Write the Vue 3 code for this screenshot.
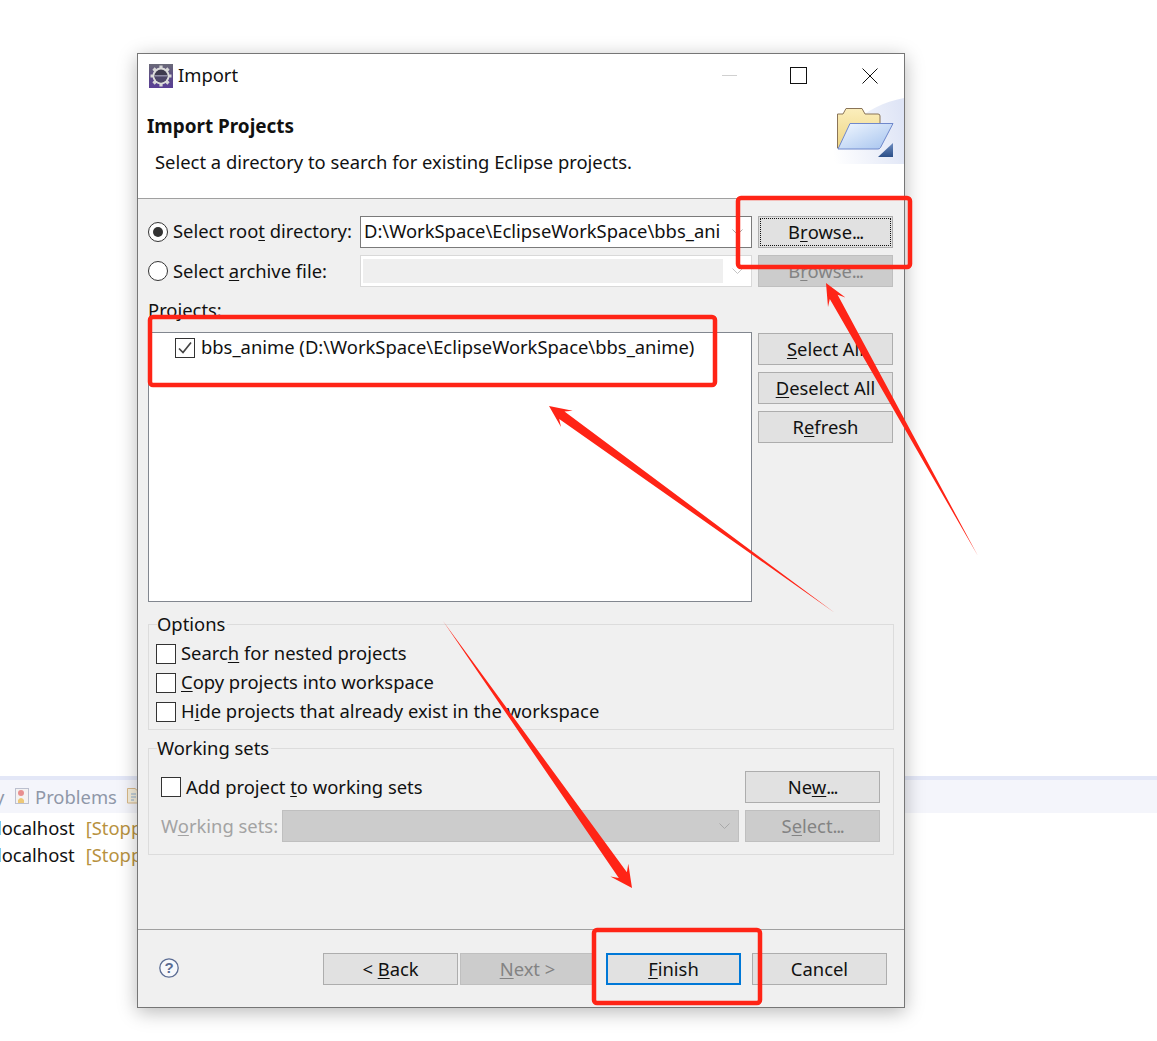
<script setup>
const rects = [
  { x: 738, y: 198, w: 172, h: 69 },
  { x: 150, y: 317, w: 565, h: 68 },
  { x: 594, y: 930, w: 166, h: 73 },
]
function arrow(tx, ty, px, py, len, barb, neck) {
  const l = Math.hypot(px - tx, py - ty)
  const dx = (px - tx) / l
  const dy = (py - ty) / l
  const nx = -dy
  const ny = dx
  const at = (back, off) => `${(px - dx * back + nx * off).toFixed(1)},${(py - dy * back + ny * off).toFixed(1)}`
  return [
    at(0, 0), at(len, barb), at(len * 0.72, neck),
    `${tx},${ty}`,
    at(len * 0.72, -neck), at(len, -barb),
  ].join(' ')
}
const arrows = [
  arrow(978, 556, 826, 283, 22, 10, 4.5),
  arrow(835, 613, 549, 406, 22, 10, 4.5),
  arrow(443, 621, 632, 888, 22, 11, 5),
]
</script>

<template>
  <div class="desktop">
    <div class="backdrop">
      <div class="tabs">
        <span class="clip">y</span>
        <svg class="tab-icon" width="15" height="17" viewBox="0 0 15 17">
          <rect x="0.5" y="0.5" width="13" height="15" fill="#f4f2f2" stroke="#bcc0cf" />
          <circle cx="6" cy="5" r="3" fill="#e88f8f" />
          <path d="M3 15 L3 12 Q6 8 9 12 L9 15 Z" fill="#edc878" />
        </svg>
        <span class="tab-label">Problems</span>
        <svg class="tab-icon second" width="13" height="17" viewBox="0 0 13 17">
          <path d="M0.5 0.500H8L12 4V15H0.5Z" fill="#f6efdc" stroke="#d8b888" />
          <path d="M4 6h5M4 9h5M4 12h3" stroke="#8fb0d0" />
        </svg>
      </div>
      <div class="server">localhost<span class="stopped">[Stopped]</span></div>
      <div class="server">localhost<span class="stopped">[Stopped]</span></div>
    </div>

    <section class="dialog">
      <header class="header">
        <div class="titlebar">
          <svg width="24" height="24" viewBox="0 0 24 24">
            <defs>
              <linearGradient id="logo" x1="0" y1="0" x2="0" y2="1">
                <stop offset="0" stop-color="#6a6a78" />
                <stop offset="0.55" stop-color="#5b4a86" />
                <stop offset="1" stop-color="#5a3f96" />
              </linearGradient>
            </defs>
            <rect width="24" height="24" fill="url(#logo)" />
            <g stroke="#d6d6d6" stroke-width="3.2">
              <path d="M12 1.500v21M1.500 12h21M4.500 4.500l15 15M19.500 4.500l-15 15" />
            </g>
            <circle cx="12" cy="12" r="8.500" fill="#dcdcdc" />
            <circle cx="12" cy="12" r="6.500" fill="#3e3a4e" />
            <path d="M5.500 12a6.500 6.500 0 0 0 13 0z" fill="#4d4668" />
            <rect x="6" y="11" width="12" height="1.500" fill="#8f8ba6" />
          </svg>
          <span class="title">Import</span>
          <div class="window-controls">
            <span class="win-btn"><i class="min"></i></span>
            <span class="win-btn"><i class="max"></i></span>
            <span class="win-btn">
              <svg width="16" height="16" viewBox="0 0 16 16"><path d="M0.5 0.500l15 15M15.500 0.500l-15 15" stroke="#111" fill="none" /></svg>
            </span>
          </div>
        </div>
        <div class="banner-row">
          <div class="banner-text">
            <h1>Import Projects</h1>
            <p>Select a directory to search for existing Eclipse projects.</p>
          </div>
          <svg class="banner" width="75" height="66" viewBox="0 0 75 66">
            <defs>
              <linearGradient id="wash" x1="0" y1="0.6" x2="1" y2="0.4">
                <stop offset="0" stop-color="#ffffff" />
                <stop offset="1" stop-color="#dfe5f6" />
              </linearGradient>
              <linearGradient id="front" x1="0" y1="0" x2="1" y2="1">
                <stop offset="0" stop-color="#f2f8ff" />
                <stop offset="1" stop-color="#a4c2ee" />
              </linearGradient>
              <linearGradient id="back" x1="0" y1="0" x2="0" y2="1">
                <stop offset="0" stop-color="#fbeebc" />
                <stop offset="1" stop-color="#eed584" />
              </linearGradient>
              <linearGradient id="grip" x1="0" y1="0" x2="0" y2="1">
                <stop offset="0" stop-color="#6d8cc0" />
                <stop offset="1" stop-color="#2b4f88" />
              </linearGradient>
            </defs>
            <path d="M0 66 C8 34 34 8 75 0 V66 Z" fill="url(#wash)" />
            <path d="M8.500 16 H14 L17 10.500 H33 L36 16 H49 Q51 16 51 18 V50 H8.500 Z" fill="url(#back)" stroke="#8a7458" />
            <path d="M21 25.500 H64 L51.500 49.500 Q50.500 51 49 51 H9 Z" fill="url(#front)" stroke="#6f88cc" />
            <path d="M64 45 V59 H49 Z" fill="url(#grip)" />
          </svg>
        </div>
      </header>

      <main class="body">
        <div class="source-grid">
          <label class="radio-label"><span class="radio on"></span><span class="lift-high">Select roo<u>t</u> directory:</span></label>
          <div class="combo active">
            <span class="combo-text lift-high">D:\WorkSpace\EclipseWorkSpace\bbs_ani</span>
            <svg class="chevron" width="11" height="6" viewBox="0 0 11 6"><path d="M0.5 0.500l5 5 5-5" fill="none" stroke="#a8a8a8" /></svg>
          </div>
          <button class="btn focused"><span>B<u>r</u>owse<i class="dots">...</i></span></button>

          <label class="radio-label"><span class="radio"></span><span class="lift">Select <u>a</u>rchive file:</span></label>
          <div class="combo off">
            <span class="combo-fill"></span>
            <svg class="chevron" width="11" height="6" viewBox="0 0 11 6"><path d="M0.5 0.500l5 5 5-5" fill="none" stroke="#c4c4c4" /></svg>
          </div>
          <button class="btn disabled">B<u>r</u>owse<i class="dots">...</i></button>
        </div>

        <div class="projects-label">Projects:</div>
        <div class="projects">
          <div class="list">
            <div class="list-row">
              <span class="check small">
                <svg width="16" height="14" viewBox="0 0 16 14"><path d="M2 7.500l4 4 8-10" fill="none" stroke="#444" stroke-width="1.700" /></svg>
              </span>
              <span class="lift3">bbs_anime (D:\WorkSpace\EclipseWorkSpace\bbs_anime)</span>
            </div>
          </div>
          <div class="side">
            <button class="btn"><u>S</u>elect All</button>
            <button class="btn"><u>D</u>eselect All</button>
            <button class="btn">R<u>e</u>fresh</button>
          </div>
        </div>

        <div class="group options">
          <div class="legend">Options</div>
          <label class="opt"><span class="check"></span><span class="lift">Searc<u>h</u> for nested projects</span></label>
          <label class="opt"><span class="check"></span><span class="lift"><u>C</u>opy projects into workspace</span></label>
          <label class="opt"><span class="check"></span><span class="lift">H<u>i</u>de projects that already exist in the workspace</span></label>
        </div>

        <div class="group sets">
          <div class="legend">Working sets</div>
          <div class="sets-row first">
            <label class="add"><span class="check"></span><span class="lift">Add project <u>t</u>o working sets</span></label>
            <button class="btn">Ne<u>w</u><i class="dots">...</i></button>
          </div>
          <div class="sets-row">
            <span class="sets-label lift">W<u>o</u>rking sets:</span>
            <div class="combo gray">
              <svg class="chevron" width="11" height="6" viewBox="0 0 11 6"><path d="M0.5 0.500l5 5 5-5" fill="none" stroke="#a8a8a8" /></svg>
            </div>
            <button class="btn disabled">S<u>e</u>lect<i class="dots">...</i></button>
          </div>
        </div>
      </main>

      <footer class="footer">
        <svg class="help" width="20" height="20" viewBox="0 0 20 20">
          <circle cx="10" cy="10" r="9.200" fill="#f7f8fb" stroke="#5b6c93" stroke-width="1.300" />
          <text x="10" y="15" text-anchor="middle" class="help-q">?</text>
        </svg>
        <div class="nav">
          <button class="btn">&lt; <u>B</u>ack</button>
          <button class="btn disabled next"><u>N</u>ext &gt;</button>
          <button class="btn primary"><u>F</u>inish</button>
          <button class="btn">Cancel</button>
        </div>
      </footer>
    </section>

    <svg class="marks" width="1157" height="1041" viewBox="0 0 1157 1041">
      <rect v-for="(r, i) in rects" :key="i" :x="r.x" :y="r.y" :width="r.w" :height="r.h" rx="3" fill="none" stroke="#ff2416" stroke-width="4.500" />
      <polygon v-for="(p, i) in arrows" :key="'a' + i" :points="p" fill="#ff2416" />
    </svg>
  </div>
</template>

<style scoped>
.desktop {
  position: relative;
  width: 1157px;
  height: 1041px;
  overflow: hidden;
  background: #fff;
  font-family: "Noto Sans", "Open Sans", sans-serif;
  font-size: 18.4px;
  color: #111;
}
u { text-underline-offset: 2px; text-decoration-thickness: 1px; }
.dots { font-style: normal; letter-spacing: -1.3px; }
.lift { padding-bottom: 2px; }
.lift-high { padding-bottom: 4px; }
.lift3 { padding-bottom: 4px; }

.backdrop { padding-top: 776px; }
.tabs {
  height: 37px;
  box-sizing: border-box;
  border-top: 4px solid #e3e7f7;
  background: #f4f5fb;
  display: flex;
  align-items: center;
  color: #8f97a8;
}
.clip { margin-left: -5px; width: 12px; }
.tab-icon { margin-left: 8px; }
.tab-icon.second { margin-left: 10px; }
.tab-label { margin-left: 5px; }
.server { height: 27px; line-height: 27px; margin-left: -3px; white-space: nowrap; position: relative; top: 1px; }
.stopped { margin-left: 11px; color: #b8923f; }

.dialog {
  position: absolute;
  left: 137px;
  top: 53px;
  width: 768px;
  height: 955px;
  box-sizing: border-box;
  border: 1px solid #767676;
  background: #f0f0f0;
  box-shadow: 0 4px 18px rgba(0, 0, 0, 0.28);
  display: flex;
  flex-direction: column;
}

.header { background: #fff; height: 145px; box-sizing: border-box; border-bottom: 1px solid #a0a0a0; flex: none; }
.titlebar { height: 44px; display: flex; align-items: center; padding-left: 11px; }
.title { margin-left: 5px; padding-bottom: 4px; }
.window-controls { margin-left: auto; display: flex; margin-right: -1px; }
.win-btn { width: 71px; height: 44px; display: flex; align-items: center; justify-content: center; padding-bottom: 1px; box-sizing: border-box; }
.min { display: block; width: 15px; height: 1px; background: #d0d0d0; margin-left: 4px; }
.max { display: block; width: 15px; height: 15px; border: 1px solid #111; }
.banner-row { display: flex; justify-content: space-between; }
.banner-text { padding: 14px 0 0 9px; }
h1 { margin: 0; font-size: 18.9px; font-weight: 700; line-height: 28px; }
p { margin: 8px 0 0 8px; line-height: 28px; }

.body { flex: 1; padding: 0 11px 0 10px; min-height: 0; }
.source-grid {
  display: grid;
  grid-template-columns: 212px 392px 141px;
  grid-auto-rows: 32px;
  column-gap: 0;
  row-gap: 7px;
  padding-top: 17px;
  align-items: center;
}
.source-grid .btn { margin-left: 6px; }
.radio-label { display: flex; align-items: center; gap: 5px; white-space: nowrap; }
.radio {
  width: 20px; height: 20px; box-sizing: border-box; flex: none;
  border: 1px solid #333; border-radius: 50%; background: #fff;
  display: flex; align-items: center; justify-content: center;
}
.radio.on::after { content: ""; width: 10px; height: 10px; border-radius: 50%; background: #333; }

.combo {
  height: 32px; box-sizing: border-box; position: relative;
  display: flex; align-items: center;
  border: 1px solid #7a7a7a; background: #fff;
}
.combo-text { margin-left: 3px; white-space: nowrap; }
.chevron { position: absolute; right: 8px; top: 12px; }
.combo.off { border-color: #d9d9d9; padding: 2px; }
.combo-fill { width: 360px; height: 24px; background: #efefef; }
.combo.gray { background: #ccc; border-color: #bfbfbf; flex: 1; }

.btn {
  display: block; width: 135px; height: 32px; box-sizing: border-box; padding: 0 0 2px;
  border: 1px solid #adadad; background: #e1e1e1; color: #111;
  font: inherit; text-align: center;
}
.btn.focused { padding: 1px; }
.btn.focused span {
  display: flex; height: 100%; align-items: center; justify-content: center;
  border: 1px dotted #111; box-sizing: border-box; padding-bottom: 2px;
}
.btn.disabled { background: #ccc; border-color: #bfbfbf; color: #838383; }
.btn.primary { border: 2px solid #0078d7; }

.projects-label { margin-top: 10px; line-height: 26px; height: 26px; }
.projects { display: flex; margin-top: 9px; gap: 6px; }
.list { width: 604px; height: 270px; box-sizing: border-box; border: 1px solid #82878f; background: #fff; }
.list-row { display: flex; align-items: center; gap: 6px; padding: 5px 0 0 26px; height: 20px; box-sizing: content-box; white-space: nowrap; }
.side { display: flex; flex-direction: column; gap: 7px; padding-top: 1px; }

.group { position: relative; border: 1px solid #dcdcdc; margin-right: -1px; }
.legend { display: table; background: #f0f0f0; height: 26px; line-height: 24px; margin: -13px 0 0 8px; padding-right: 2px; }
.options { margin-top: 22px; height: 106px; box-sizing: border-box; }
.opt { display: flex; align-items: center; height: 29px; gap: 5px; padding-left: 7px; }
.opt:first-of-type { margin-top: 1px; }
.check {
  width: 20px; height: 20px; box-sizing: border-box; flex: none;
  border: 1px solid #333; background: #fff;
  display: flex; align-items: center; justify-content: center;
}

.sets { margin-top: 18px; height: 107px; box-sizing: border-box; padding: 0 13px 0 12px; }
.sets .legend { margin-left: -4px; }
.sets-row { display: flex; align-items: center; height: 32px; }
.sets-row.first { margin-top: 9px; margin-bottom: 7px; justify-content: space-between; }
.add { display: flex; align-items: center; gap: 5px; }
.sets-label { width: 121px; color: #a3a3a3; white-space: nowrap; }
.sets-row .combo { margin-right: 6px; }

.footer {
  flex: none; height: 78px; box-sizing: border-box;
  border-top: 1px solid #a0a0a0;
  display: flex; align-items: flex-start;
  padding: 23px 17px 0 21px;
}
.help { margin-top: 5px; }
.help-q { font-size: 15px; font-weight: 700; fill: #5b6c93; font-family: "Liberation Sans", sans-serif; }
.nav { margin-left: auto; display: flex; gap: 11px; }
.next { margin-left: -9px; }

.marks { position: absolute; left: 0; top: 0; pointer-events: none; }
</style>
